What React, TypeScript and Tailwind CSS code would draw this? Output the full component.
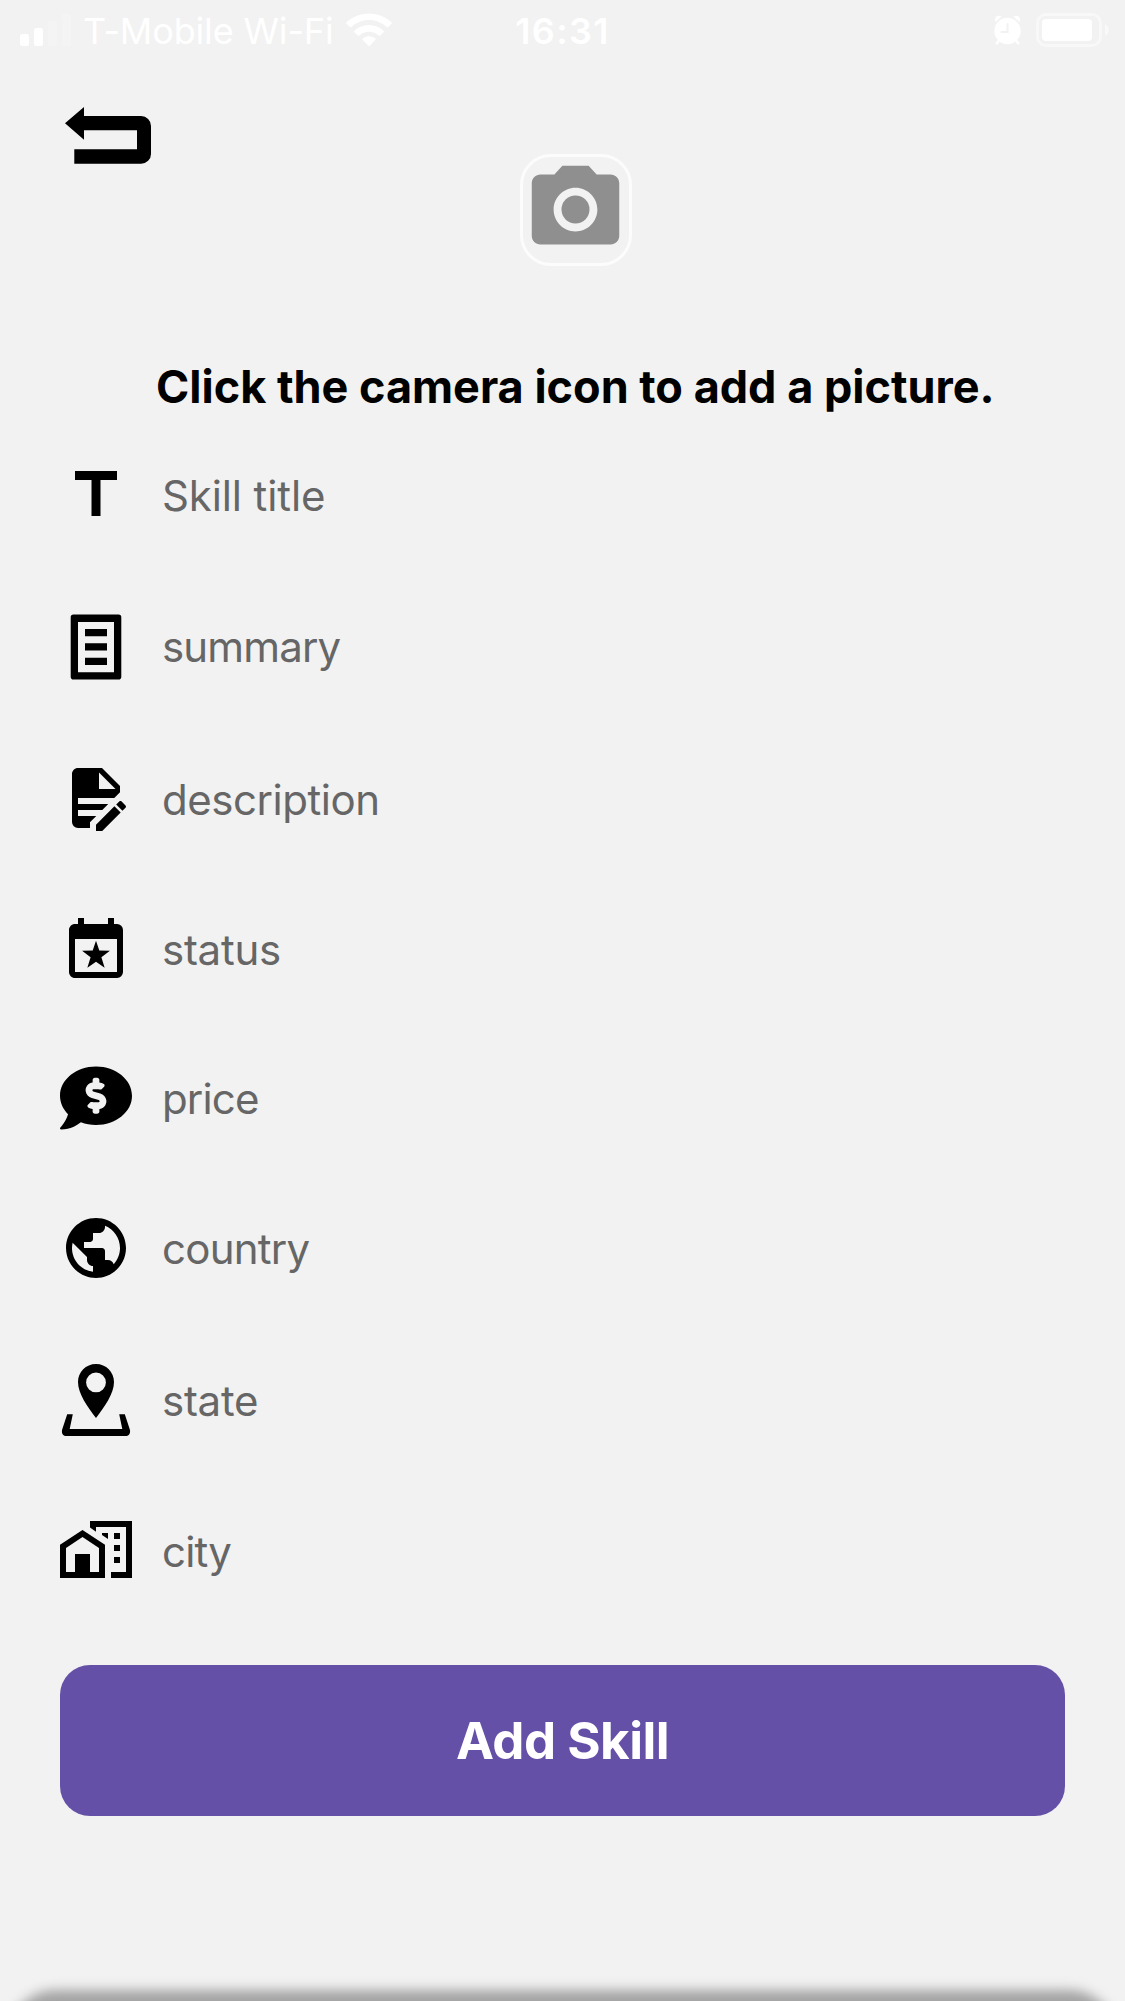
import React from "react";
import { FaCommentDollar } from "react-icons/fa";
import { MdPublic, MdPhotoCamera } from "react-icons/md";

const svg = "block h-[72px] w-[72px] shrink-0";

function TitleIcon() {
  return (
    <svg viewBox="0 0 24 24" className={svg}>
      <path d="M5 4v3h5.500v12h3V7H19V4z" />
    </svg>
  );
}

function SummaryIcon() {
  return (
    <svg viewBox="0 0 72 72" className={svg}>
      <path
        fillRule="evenodd"
        d="M13.500 3.500h45a2.800 2.800 0 0 1 2.800 2.800v59.400a2.800 2.800 0 0 1-2.800 2.800h-45a2.800 2.800 0 0 1-2.800-2.800V6.300a2.800 2.800 0 0 1 2.800-2.800zM18 10.900v50.300h36V10.900zM25 18h22v7.200H25zM25 32.300h22v7.300H25zM25 46.800h22V54H25z"
      />
    </svg>
  );
}

function DescriptionIcon() {
  return (
    <svg viewBox="0 0 24 24" className={svg}>
      <path d="M6 2C4.890 2 4 2.890 4 4V20A2 2 0 0 0 6 22H10V20.090L12.090 18H6V16H14.090L16.090 14H6V12H18.090L20 10.090V8L14 2H6M13 3.500L18.500 9H13V3.500M20.150 13C20 13 19.860 13.050 19.750 13.160L18.730 14.180L20.820 16.260L21.840 15.250C22.050 15.030 22.050 14.670 21.840 14.460L20.540 13.160C20.430 13.050 20.290 13 20.150 13M18.140 14.770L12 20.920V23H14.080L20.230 16.850L18.140 14.770Z" />
    </svg>
  );
}

function StatusIcon() {
  return (
    <svg viewBox="0 0 24 24" className={svg}>
      <path d="M19 19V8H5V19H19M16 1H18V3H19A2 2 0 0 1 21 5V19A2 2 0 0 1 19 21H5C3.890 21 3 20.100 3 19V5C3 3.890 3.890 3 5 3H6V1H8V3H16V1Z" />
      <path d="M12 8.600L13.100 11.800L16.650 11.900L13.800 14.050L14.880 17.600L12 15.550L9.120 17.600L10.200 14.050L7.350 11.900L10.900 11.800Z" />
    </svg>
  );
}

function StateIcon() {
  return (
    <svg viewBox="0 0 72 72" className={svg}>
      <path
        fillRule="evenodd"
        d="M36 0c10.200 0 18 8 18 18 0 11.500-9.500 25-18 36C27.500 43 18 29.500 18 18 18 8 25.800 0 36 0zm0 8.500a9.900 9.900 0 1 0 0 19.800 9.900 9.900 0 0 0 0-19.800z"
      />
      <path d="M7.200 50.200h5.600L9.700 65h52.600l-3.100-14.800h5.600l5.100 15.500c.8 3.300-.9 6.300-4 6.300H6.100c-3.100 0-4.800-3-4-6.300z" />
    </svg>
  );
}

function CityIcon() {
  return (
    <svg viewBox="0 0 24 24" className={svg}>
      <path d="M10 2H24V21H17V19H22V4H12V5.600L10 4.200zM14 6H16V8L14 6.650zM18 6h2v2h-2zM18 10h2v2h-2zM18 14h2v2h-2z" />
      <path fillRule="evenodd" d="M0 21V9.900L7.500 5 15 9.900V21zM2 19H5V13H10V19H13V11L7.500 7.350 2 11z" />
    </svg>
  );
}

function BackIcon() {
  return (
    <svg viewBox="0 0 87 58" className="block h-[58px] w-[87px]">
      <path d="M0 16.300L19 0v9.100h57.200a9.800 9.800 0 0 1 9.800 9.800v28a9.800 9.800 0 0 1-9.800 9.800H9.300V42.300H72V23.300H19V32.700z" />
    </svg>
  );
}

function SignalIcon() {
  return (
    <svg viewBox="0 0 52 34" className="h-[34px] w-[52px] fill-white">
      <rect x="0" y="21" width="9" height="12" rx="2.500" />
      <rect x="14" y="15" width="9" height="18" rx="2.500" />
      <rect x="28" y="8" width="9" height="25" rx="2.500" opacity=".2" />
      <rect x="42" y="1" width="9" height="32" rx="2.500" opacity=".2" />
    </svg>
  );
}

function WifiIcon() {
  return (
    <svg viewBox="0 0 46 34" className="h-[34px] w-[46px] fill-white">
      <path d="M23 0.500C32 .5 40 4 45.500 9.300c.5.500.5 1 0 1.500l-3.300 3.200c-.5.500-1 .5-1.500 0C36 9.700 30 7 23 7S10 9.700 5.300 14c-.5.500-1 .5-1.500 0L.5 10.800c-.5-.5-.5-1 0-1.500C6 4 14 .5 23 .5z" />
      <path d="M23 12c5.600 0 10.800 2.100 14.600 5.700.5.500.5 1 0 1.500l-3.400 3.300c-.5.500-1 .5-1.500 0-2.600-2.300-6-3.700-9.700-3.700s-7.100 1.400-9.700 3.700c-.5.500-1 .5-1.500 0l-3.400-3.300c-.5-.5-.5-1 0-1.500C12.200 14.100 17.400 12 23 12z" />
      <path d="M23 23.300c2.400 0 4.600.9 6.300 2.300.5.500.5 1 0 1.500l-5.600 5.600c-.4.400-1 .4-1.400 0l-5.600-5.600c-.5-.5-.5-1 0-1.500 1.700-1.400 3.900-2.300 6.300-2.300z" />
    </svg>
  );
}

function AlarmIcon() {
  return (
    <svg viewBox="0 0 28 30" className="h-[30px] w-[28px]">
      <g fill="none" stroke="#fff" strokeWidth="2.600" strokeLinecap="round">
        <path d="M5 25.500L2.800 28.200M22 25.500l2.200 2.700" />
      </g>
      <path
        fill="#fff"
        d="M1.500 7C.3 5 1 1.300 4 .8c1.300-.2 2.600.1 3.500.9zM25.500 7c1.200-2 .5-5.700-2.500-6.200-1.300-.2-2.600.1-3.500.9z"
      />
      <circle cx="13.500" cy="16" r="13.200" fill="#fff" />
      <path d="M13.500 9V17H7.500" fill="none" stroke="#f2f2f2" strokeWidth="2" strokeLinecap="round" />
    </svg>
  );
}

function BatteryIcon() {
  return (
    <svg viewBox="0 0 74 34" className="h-[34px] w-[74px]">
      <rect x="1.500" y="1.500" width="63" height="31" rx="8.500" fill="none" stroke="#fff" strokeOpacity=".45" strokeWidth="3" />
      <rect x="6" y="6" width="50" height="22" rx="4" fill="#fff" />
      <path d="M69 11c5 2.500 5 9.500 0 12z" fill="#fff" fillOpacity=".5" />
    </svg>
  );
}

const fields = [
  { label: "Skill title", icon: <TitleIcon />, row: "mt-[42px]", text: "tracking-[-0.12px] pt-px" },
  { label: "summary", icon: <SummaryIcon />, row: "mt-[80px]", text: "tracking-[-0.85px]" },
  { label: "description", icon: <DescriptionIcon />, row: "mt-[79px]", text: "tracking-[-0.45px] pt-[4px]" },
  { label: "status", icon: <StatusIcon />, row: "mt-[81px]", text: "tracking-[-0.25px] pb-[2px]" },
  { label: "price", icon: <FaCommentDollar className={svg} />, row: "mt-[74.5px]", text: "tracking-[-0.85px] pt-[2px]" },
  { label: "country", icon: <MdPublic className={svg} />, row: "mt-[78.5px]", text: "tracking-[-0.75px] pt-[2px]" },
  { label: "state", icon: <StateIcon />, row: "mt-[80px]", text: "tracking-[-0.25px] pt-[2px]" },
  { label: "city", icon: <CityIcon />, row: "mt-[79px]", text: "tracking-[-0.8px] pt-[2px]" },
];

export default function App() {
  return (
    <div className="relative flex h-[2001px] w-[1125px] flex-col overflow-hidden bg-[#f2f2f2] font-['Inter',sans-serif] text-black">
      <header className="grid h-[60px] grid-cols-3 items-start text-[36px] leading-[62px] text-white">
        <div className="flex pl-5">
          <div className="shrink-0 pt-[13px]"><SignalIcon /></div>
          <span className="ml-[11px] w-[263px] shrink-0 whitespace-nowrap tracking-[-0.15px]">T-Mobile Wi-Fi</span>
          <div className="shrink-0 pt-[13px]"><WifiIcon /></div>
        </div>
        <div className="text-center font-semibold tracking-[1.3px]">16:31</div>
        <div className="flex justify-end pt-[13px] pr-[15px]">
          <div className="pt-[2px]"><AlarmIcon /></div>
          <div className="ml-[14px]"><BatteryIcon /></div>
        </div>
      </header>

      <div className="flex h-[206px] pl-[65px]">
        <button className="mt-[47px] h-[58px] w-[87px]"><BackIcon /></button>
        <button className="mt-[94px] ml-[368px] flex h-[112px] w-[112px] items-start justify-start rounded-[31px] border-[3px] border-white/75">
          <MdPhotoCamera className="-ml-[0.5px] h-[105px] w-[105px] shrink-0 text-[#8f8f8f]" />
        </button>
      </div>

      <h1 className="mt-[91px] h-[60px] pl-[156px] text-[45px] leading-[60px] font-bold whitespace-nowrap">
        Click the camera icon to add a picture.
      </h1>

      <main className="flex flex-col px-[60px]">
        {fields.map((f) => (
          <div key={f.label} className={`flex h-[72px] items-center ${f.row}`}>
            {f.icon}
            <label className={`ml-[30px] text-[42px] leading-[60px] text-[#666] ${f.text}`}>{f.label}</label>
          </div>
        ))}
        <button className="mt-[78px] h-[151px] rounded-[30px] bg-[#6550a7] pt-[2px] text-[51px] font-bold tracking-[-0.5px] text-white">
          Add Skill
        </button>
      </main>

      <div className="absolute top-[1990px] right-[8px] left-[8px] h-[100px] rounded-[48px] bg-[#a3a3a3] blur-[6px]" />
    </div>
  );
}
